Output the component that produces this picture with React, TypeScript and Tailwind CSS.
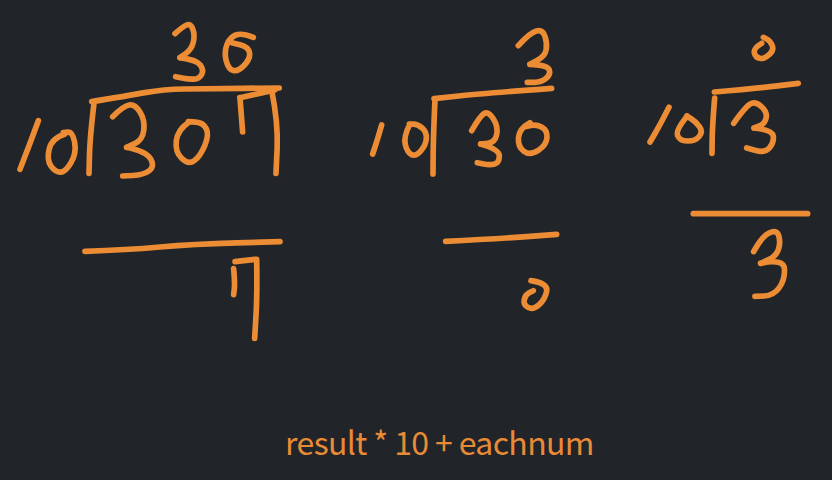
// Handwritten long-division notes, strokes traced from the reference
type Pt = [number, number]

// smooth a list of points through the midpoints
function smooth(pts: Pt[]) {
	if (pts.length < 3) return `M${pts.map(p => p.join(' ')).join(' L')}`
	let d = `M${pts[0][0]} ${pts[0][1]}`
	for (let i = 1; i < pts.length - 1; i++) {
		const mx = (pts[i][0] + pts[i + 1][0]) / 2
		const my = (pts[i][1] + pts[i + 1][1]) / 2
		d += ` Q${pts[i][0]} ${pts[i][1]} ${mx} ${my}`
	}
	const last = pts[pts.length - 1]
	return `${d} L${last[0]} ${last[1]}`
}

function Ink({ x, y, w = 17, strokes }: { x: number; y: number; w?: number; strokes: Pt[][] }) {
	return (
		<g transform={`translate(${x} ${y}) scale(0.3333)`} strokeWidth={w}>
			{strokes.map((s, i) => (
				<path key={i} d={smooth(s)} />
			))}
		</g>
	)
}

const first: Pt[][] = [
	// 3 on top
	[[525, 71], [548, 50], [572, 40], [585, 75], [575, 118], [540, 143]],
	[[540, 143], [590, 150], [612, 180], [598, 207], [565, 208], [527, 200]],
	// 0 on top
	[[760, 82], [725, 68], [690, 82], [672, 125], [685, 178], [715, 185], [752, 145], [745, 110], [695, 98]],
	// bar + right side
	[[275, 275], [380, 258], [490, 238], [620, 236], [838, 234]],
	[[815, 240], [835, 340], [828, 490]],
	[[825, 240], [720, 263]],
	[[720, 263], [728, 366]],
	[[282, 280], [270, 380], [267, 490]],
	// 10
	[[115, 332], [90, 400], [60, 478]],
	[[195, 372], [155, 385], [140, 450], [165, 485], [195, 488], [230, 430], [218, 365], [190, 368]],
	// 3 in the dividend
	[[338, 320], [370, 288], [405, 282], [435, 330], [428, 390], [380, 412]],
	[[380, 412], [440, 425], [465, 470], [430, 495], [368, 498]],
	// 0 in the dividend
	[[565, 338], [533, 360], [525, 425], [565, 465], [600, 440], [628, 375], [610, 338], [565, 335]],
]

const firstRemainder: Pt[][] = [
	[[75, 94], [200, 90], [400, 72], [660, 65]],
	[[525, 125], [585, 118]],
	[[590, 118], [592, 220], [584, 355]],
	[[521, 146], [525, 190], [521, 224]],
]

const second: Pt[][] = [
	[[505, 47], [540, 8], [578, -2], [592, 40], [585, 78], [540, 103]],
	[[540, 103], [592, 105], [603, 132], [575, 157], [532, 157]],
	[[605, 175], [400, 190], [252, 206]],
	[[255, 210], [250, 320], [249, 432]],
	[[95, 285], [82, 330], [68, 372]],
	[[180, 282], [160, 320], [172, 368], [197, 380], [228, 345], [230, 305], [203, 283], [178, 282]],
	[[365, 302], [390, 258], [415, 243], [445, 290], [435, 338], [392, 342]],
	[[392, 342], [448, 358], [448, 398], [420, 406], [382, 398]],
	[[540, 278], [508, 295], [503, 350], [540, 378], [590, 345], [592, 300], [560, 283], [525, 290]],
]

const secondRemainder: Pt[][] = [
	[[47, 124], [180, 118], [380, 103]],
	[[303, 242], [355, 250], [345, 298], [310, 330], [280, 315], [285, 285], [310, 272]],
]

const third: Pt[][] = [
	[[395, 70], [370, 85], [376, 112], [402, 118], [433, 90], [420, 62], [400, 52]],
	[[253, 216], [380, 205], [505, 190]],
	[[254, 234], [247, 320], [246, 400]],
	[[117, 262], [90, 315], [60, 366]],
	[[172, 288], [137, 330], [148, 362], [195, 364], [220, 335], [195, 303], [170, 288]],
	[[311, 310], [345, 262], [375, 243], [412, 275], [405, 312], [372, 324]],
	[[372, 324], [428, 330], [432, 368], [405, 399], [350, 384]],
]

const thirdRemainder: Pt[][] = [
	[[790, 41], [960, 41], [1133, 41]],
	[[971, 155], [995, 110], [1040, 88], [1052, 125], [1040, 168], [992, 190]],
	[[992, 190], [1062, 175], [1065, 240], [1030, 287], [975, 289]],
]

export default function App() {
	return (
		<div className="w-[832px] h-[480px] bg-[#212429] flex flex-col overflow-hidden">
			<svg
				width="832"
				height="419"
				viewBox="0 0 832 419"
				fill="none"
				stroke="#ec8c34"
				strokeLinecap="round"
				strokeLinejoin="round"
				className="block shrink-0"
			>
				<Ink x={0} y={10} strokes={first} />
				<Ink x={60} y={220} strokes={firstRemainder} />
				<Ink x={350} y={30} strokes={second} />
				<Ink x={430} y={200} strokes={secondRemainder} />
				<Ink x={630} y={20} strokes={third} />
				<Ink x={430} y={200} strokes={thirdRemainder} />
			</svg>
			<p
				className="pl-[47px] text-center text-[#e98b36] text-[32px] leading-[44px] tracking-[-0.62px]"
				style={{ fontFamily: '"Noto Sans CJK SC", "Noto Sans", sans-serif' }}
			>
				result * 10 + eachnum
			</p>
		</div>
	)
}
